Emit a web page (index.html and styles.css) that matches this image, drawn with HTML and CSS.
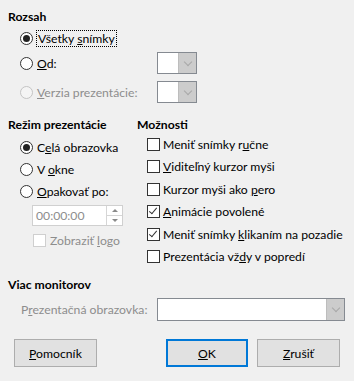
FILE: index.html
```html
<!DOCTYPE html>
<html lang="sk">
<head>
    <meta charset="UTF-8">
    <meta name="viewport" content="width=device-width, initial-scale=1.0">
    <title>Prezentácia</title>
    <link rel="stylesheet" href="styles.css">
</head>
<body>
    <div class="dialog">
        <!-- Rozsah -->
        <div class="heading">Rozsah</div>
        <div class="range">
            <div class="row row-first">
                <span class="radio checked"></span>
                <span class="focus">Všetky <u>s</u>nímky</span>
            </div>
            <div class="row row-combo">
                <label class="combo-label"><span class="radio"></span><span><u>O</u>d:</span></label>
                <div class="combo small"><div class="field"></div><div class="drop"><span class="chev"></span></div></div>
            </div>
            <div class="row row-combo second disabled">
                <label class="combo-label"><span class="radio"></span><span><u>V</u>erzia prezentácie:</span></label>
                <div class="combo small"><div class="field"></div><div class="drop"><span class="chev"></span></div></div>
            </div>
        </div>

        <div class="columns">
            <div class="col-left">
                <div class="heading">Režim prezentácie</div>
                <div class="list-left">
                    <div class="row"><span class="radio checked"></span><span>C<u>e</u>lá obrazovka</span></div>
                    <div class="row"><span class="radio"></span><span>V <u>o</u>kne</span></div>
                    <div class="row"><span class="radio"></span><span><u>O</u>pakovať po:</span></div>
                    <div class="spin">
                        <span class="spin-text">00:00:00</span>
                        <span class="spin-btns"><span class="up"></span><span class="down"></span></span>
                    </div>
                    <div class="row disabled logo"><span class="check"></span><span>Zobraziť <u>l</u>ogo</span></div>
                </div>
            </div>
            <div class="col-right">
                <div class="heading">Možnosti</div>
                <div class="list-right">
                    <div class="crow"><span class="check"></span><span>Meniť snímky r<u>u</u>čne</span></div>
                    <div class="crow"><span class="check"></span><span><u>V</u>iditeľný kurzor myši</span></div>
                    <div class="crow"><span class="check"></span><span>Kurzor myši ako <u>p</u>ero</span></div>
                    <div class="crow"><span class="check checked"></span><span><u>A</u>nimácie povolené</span></div>
                    <div class="crow"><span class="check checked"></span><span>Meniť snímky <u>k</u>likaním na pozadie</span></div>
                    <div class="crow"><span class="check"></span><span>Prezentácia vž<u>d</u>y v popredí</span></div>
                </div>
            </div>
        </div>

        <div class="heading monitors">Viac monitorov</div>
        <div class="monitor-row">
            <span class="monitor-label">P<u>r</u>ezentačná obrazovka:</span>
            <div class="combo wide"><div class="field"></div><div class="drop"><span class="chev"></span></div></div>
        </div>

        <div class="buttons">
            <button class="btn"><u>P</u>omocník</button>
            <div class="right-btns">
                <button class="btn default"><u>O</u>K</button>
                <button class="btn"><u>Z</u>rušiť</button>
            </div>
        </div>
    </div>
</body>
</html>
```

FILE: styles.css
```css
body {
    margin: 0;
    background: #f0f0f0;
    font-family: Lato, "Noto Sans", sans-serif;
    font-size: 12.2px;
    color: #000;
    white-space: nowrap;
}
.dialog {
    padding: 9px 8px 0 8px;
}
u {
    text-decoration-thickness: 1px;
    text-underline-offset: 1px;
}
.heading {
    font-weight: bold;
    height: 16px;
    line-height: 16px;
}
.row {
    display: flex;
    align-items: center;
    height: 22px;
    gap: 4px;
}
.range {
    padding-left: 12px;
}
.row-first {
    margin-top: 2px;
}
.row-combo {
    margin-top: 3px;
    gap: 0;
}
.row-combo.second {
    margin-top: 7px;
}
.combo-label {
    display: flex;
    align-items: center;
    gap: 4px;
    width: 137px;
}
.focus {
    outline: 1px dotted #000;
    padding: 0 1px;
    line-height: 15px;
}
.disabled {
    color: #8d8d8d;
}
.radio {
    width: 11px;
    height: 11px;
    border: 1px solid #333;
    border-radius: 50%;
    background: #fff;
    position: relative;
    flex: none;
}
.radio.checked::after {
    content: "";
    position: absolute;
    left: 2px;
    top: 2px;
    width: 7px;
    height: 7px;
    border-radius: 50%;
    background: #222;
}
.disabled .radio {
    border-color: #c4c4c4;
    background: #f4f4f4;
}
.check {
    width: 11px;
    height: 11px;
    border: 1px solid #333;
    background: #fff;
    position: relative;
    flex: none;
}
.check.checked::after {
    content: "";
    position: absolute;
    left: 3px;
    top: 0px;
    width: 3px;
    height: 7px;
    border-right: 1px solid #333;
    border-bottom: 1px solid #333;
    transform: rotate(40deg);
}
.disabled .check {
    border-color: #cfcfcf;
}
.combo {
    display: flex;
    height: 20px;
    border: 1px solid #858a91;
    background: #fff;
}
.combo .field {
    flex: 1;
}
.combo .drop {
    width: 17px;
    background: #cccccc;
    border-left: 1px solid #bdbdbd;
    display: flex;
    align-items: center;
    justify-content: center;
}
.chev {
    width: 5px;
    height: 5px;
    border-right: 1px solid #a8a8a8;
    border-bottom: 1px solid #a8a8a8;
    transform: rotate(45deg);
    margin-top: -3px;
}
.combo.small {
    width: 38px;
}
.columns {
    display: flex;
    margin-top: 14px;
}
.col-left {
    width: 129px;
}
.list-left {
    padding-left: 12px;
    margin-top: 3px;
}
.spin {
    display: flex;
    width: 89px;
    height: 19px;
    border: 1px solid #d0d0d0;
    background: #fff;
    margin: 3px 0 0 12px;
    box-sizing: content-box;
}
.spin-text {
    flex: 1;
    color: #8d8d8d;
    line-height: 19px;
    padding-left: 3px;
}
.spin-btns {
    width: 15px;
    border-left: 1px solid #d6d6d6;
    display: flex;
    flex-direction: column;
}
.spin-btns span {
    flex: 1;
    position: relative;
}
.spin-btns .up {
    border-bottom: 1px solid #d6d6d6;
}
.spin-btns span::after {
    content: "";
    position: absolute;
    left: 5px;
    border-left: 3px solid transparent;
    border-right: 3px solid transparent;
}
.spin-btns .up::after {
    top: 3px;
    border-bottom: 3px solid #8a8a8a;
}
.spin-btns .down::after {
    top: 3px;
    border-top: 3px solid #8a8a8a;
}
.logo {
    margin-top: 3px;
    height: 22px;
    padding-left: 13px;
}
.list-right {
    padding-left: 10px;
}
.crow {
    display: flex;
    align-items: center;
    gap: 3px;
    height: 22.5px;
}
.monitors {
    margin-top: 9px;
}
.monitor-row {
    display: flex;
    align-items: center;
    margin-top: 5px;
    height: 23px;
}
.monitor-label {
    color: #8d8d8d;
    width: 136px;
    padding-left: 13px;
}
.combo.wide {
    width: 186px;
    height: 21px;
}
.buttons {
    display: flex;
    justify-content: space-between;
    margin-top: 18px;
    padding: 0 6px;
}
.right-btns {
    display: flex;
    gap: 9px;
}
.btn {
    font-family: inherit;
    font-size: 12.2px;
    color: #000;
    background: #e1e1e1;
    border: 1px solid #adadad;
    width: 83px;
    height: 28px;
    padding: 0;
}
.btn.default {
    border: 2px solid #0078d7;
    width: 82px;
}
```
